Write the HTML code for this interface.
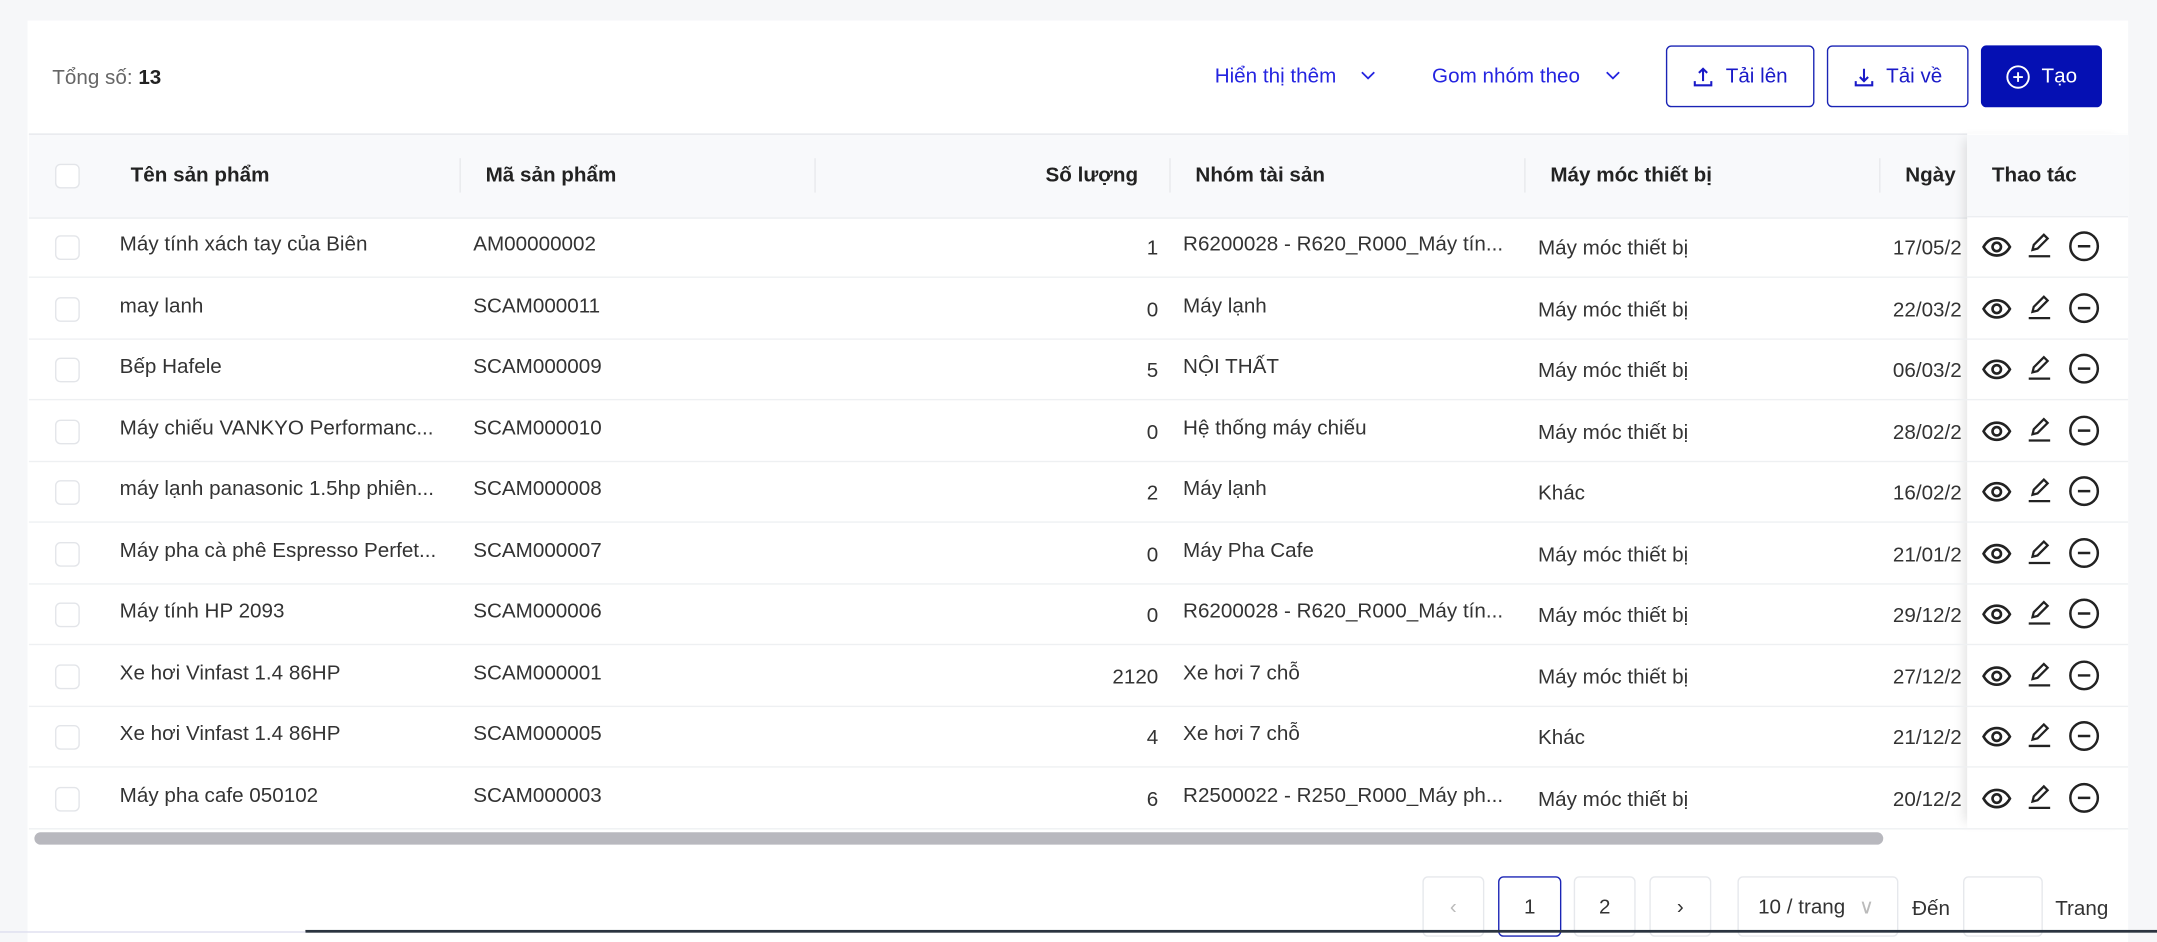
<!DOCTYPE html>
<html><head><meta charset="utf-8"><style>
*{margin:0;padding:0;box-sizing:border-box}
html,body{width:2157px;height:932px;overflow:hidden;background:#f6f7f9}
#s{position:absolute;left:0;top:0;width:1568px;height:678px;transform:scale(1.37564);transform-origin:0 0;font-family:"Liberation Sans",sans-serif;font-size:15px;color:#333}
.a{position:absolute;white-space:nowrap}
.card{left:20px;top:15px;width:1527px;height:670px;background:#fff}
.hdr{left:21px;top:97px;width:1526px;height:62px;background:#f8f9fb;border-top:1px solid #e6e8ec;border-bottom:1px solid #eceef1}
.th{font-weight:bold;color:#222;top:119px}
.sep{top:115px;width:1px;height:25px;background:#e8e9ec}
.row{left:21px;width:1409px;height:1px;background:#eef0f2}
.cb{width:18px;height:18px;border:1px solid #e3e5e9;border-radius:4px;background:#fff}
.btn{top:33px;height:45px;border:1px solid #1a24b5;border-radius:4px;color:#1a1ac8;font-size:15px;display:flex;align-items:center;justify-content:center;gap:8px}
.lk{color:#2424e0;top:47px}
.pg{top:637px;height:44px;border:1px solid #e6e8ec;border-radius:4px;display:flex;align-items:center;justify-content:center;color:#333;background:#fff}
</style></head><body><div id="s">
<div class="a card"></div>
<div class="a" style="left:38px;top:48px;color:#666">Tổng số: <b style="color:#222;font-weight:bold">13</b></div>
<div class="a lk" style="left:883px">Hiển thị thêm</div>
<svg class="a" style="left:989px;top:51px" width="11" height="8" viewBox="0 0 11 8" fill="none" stroke="#2424e0" stroke-width="1.3"><path d="M1 1.5l4.5 4.5 4.5-4.5"/></svg>
<div class="a lk" style="left:1041px">Gom nhóm theo</div>
<svg class="a" style="left:1167px;top:51px" width="11" height="8" viewBox="0 0 11 8" fill="none" stroke="#2424e0" stroke-width="1.3"><path d="M1 1.5l4.5 4.5 4.5-4.5"/></svg>
<div class="a btn" style="left:1211px;width:108px"><svg width="16" height="16" viewBox="0 0 16 16" fill="none" stroke="#1a1ac8" stroke-width="1.5"><path d="M8 11V2M5 5l3-3 3 3M2 11v3h12v-3"/></svg>Tải lên</div>
<div class="a btn" style="left:1328px;width:103px"><svg width="16" height="16" viewBox="0 0 16 16" fill="none" stroke="#1a1ac8" stroke-width="1.5"><path d="M8 2v9M5 8l3 3 3-3M2 11v3h12v-3"/></svg>Tải về</div>
<div class="a btn" style="left:1440px;width:88px;background:#0510b3;color:#fff;border-color:#0510b3"><svg width="18" height="18" viewBox="0 0 18 18" fill="none" stroke="#fff" stroke-width="1.4"><circle cx="9" cy="9" r="7.8"/><path d="M9 5.5v7M5.5 9h7"/></svg>Tạo</div>
<div class="a hdr"></div>
<div class="a cb" style="left:40px;top:119px"></div>
<div class="a th" style="left:95px">Tên sản phẩm</div>
<div class="a sep" style="left:334px"></div>
<div class="a th" style="left:353px">Mã sản phẩm</div>
<div class="a sep" style="left:592px"></div>
<div class="a th" style="left:760px">Số lượng</div>
<div class="a sep" style="left:850px"></div>
<div class="a th" style="left:869px">Nhóm tài sản</div>
<div class="a sep" style="left:1108px"></div>
<div class="a th" style="left:1127px">Máy móc thiết bị</div>
<div class="a sep" style="left:1366px"></div>
<div class="a th" style="left:1385px">Ngày</div>
<div class="a" style="left:1430px;top:97px;width:117px;height:505px;background:#fff;box-shadow:-6px 0 8px -4px rgba(0,0,0,.12)"></div>
<div class="a" style="left:1430px;top:98px;width:117px;height:60px;background:#f8f9fb;border-bottom:1px solid #eceef1"></div>
<div class="a th" style="left:1448px">Thao tác</div>
<div id="rows"></div>
<div class="a" style="left:25px;top:605px;width:1344px;height:9px;border-radius:5px;background:#b8b8be"></div>
<div class="a pg" style="left:1034px;width:45px;color:#bbb">‹</div>
<div class="a pg" style="left:1089px;width:46px;border-color:#1a24b5">1</div>
<div class="a pg" style="left:1144px;width:45px">2</div>
<div class="a pg" style="left:1199px;width:45px">›</div>
<div class="a pg" style="left:1263px;width:117px;justify-content:flex-start;padding-left:14px">10 / trang <span style="color:#bbb;margin-left:10px">∨</span></div>
<div class="a" style="left:1390px;top:652px">Đến</div>
<div class="a pg" style="left:1427px;width:58px"></div>
<div class="a" style="left:1494px;top:652px">Trang</div>
<div class="a" style="left:222px;top:676px;width:1346px;height:2px;background:#2b3440"></div>
<div class="a" style="left:0;top:677px;width:222px;height:1px;background:#dde"></div>
</div>
<script>
var d=[["Máy tính xách tay của Biên","AM00000002","1","R6200028 - R620_R000_Máy tín...","Máy móc thiết bị","17/05/2"],
["may lanh","SCAM000011","0","Máy lạnh","Máy móc thiết bị","22/03/2"],
["Bếp Hafele","SCAM000009","5","NỘI THẤT","Máy móc thiết bị","06/03/2"],
["Máy chiếu VANKYO Performanc...","SCAM000010","0","Hệ thống máy chiếu","Máy móc thiết bị","28/02/2"],
["máy lạnh panasonic 1.5hp phiên...","SCAM000008","2","Máy lạnh","Khác","16/02/2"],
["Máy pha cà phê Espresso Perfet...","SCAM000007","0","Máy Pha Cafe","Máy móc thiết bị","21/01/2"],
["Máy tính HP 2093","SCAM000006","0","R6200028 - R620_R000_Máy tín...","Máy móc thiết bị","29/12/2"],
["Xe hơi Vinfast 1.4 86HP","SCAM000001","2120","Xe hơi 7 chỗ","Máy móc thiết bị","27/12/2"],
["Xe hơi Vinfast 1.4 86HP","SCAM000005","4","Xe hơi 7 chỗ","Khác","21/12/2"],
["Máy pha cafe 050102","SCAM000003","6","R2500022 - R250_R000_Máy ph...","Máy móc thiết bị","20/12/2"]];
var h="";
var eye='<svg width="23" height="23" viewBox="0 0 24 24" fill="none" stroke="#222" stroke-width="2"><path d="M2 12c2.5-4.5 6-6.5 10-6.5s7.5 2 10 6.5c-2.5 4.5-6 6.5-10 6.5S4.5 16.5 2 12z"/><circle cx="12" cy="12" r="3.2"/></svg>';
var pen='<svg width="22" height="22" viewBox="0 0 24 24" fill="none" stroke="#222" stroke-width="1.8"><path d="M6 16l1-4 8-8 3 3-8 8z"/><path d="M3 21h17"/></svg>';
var mi='<svg width="24" height="24" viewBox="0 0 24 24" fill="none" stroke="#222" stroke-width="1.8"><circle cx="12" cy="12" r="10"/><path d="M7.5 12h9"/></svg>';
for(var i=0;i<d.length;i++){var c=179+i*44.5,r=d[i];var t=c-10;
h+='<div class="a cb" style="left:40px;top:'+(c-8)+'px"></div>';
h+='<div class="a" style="left:87px;top:'+t+'px">'+r[0]+'</div>';
h+='<div class="a" style="left:344px;top:'+t+'px">'+r[1]+'</div>';
h+='<div class="a" style="left:600px;width:242px;text-align:right;top:'+(t+3)+'px">'+r[2]+'</div>';
h+='<div class="a" style="left:860px;top:'+t+'px">'+r[3]+'</div>';
h+='<div class="a" style="left:1118px;top:'+(t+3)+'px">'+r[4]+'</div>';
h+='<div class="a" style="left:1376px;top:'+(t+3)+'px;width:54px;overflow:hidden">'+r[5]+'</div>';
h+='<div class="a" style="left:1440px;top:'+(c-11)+'px">'+eye+'</div>';
h+='<div class="a" style="left:1472px;top:'+(c-12)+'px">'+pen+'</div>';
h+='<div class="a" style="left:1503px;top:'+(c-12)+'px">'+mi+'</div>';
h+='<div class="a row" style="top:'+(c+22)+'px;width:1526px"></div>';}
document.getElementById("rows").outerHTML=h;
</script>
</body></html>
